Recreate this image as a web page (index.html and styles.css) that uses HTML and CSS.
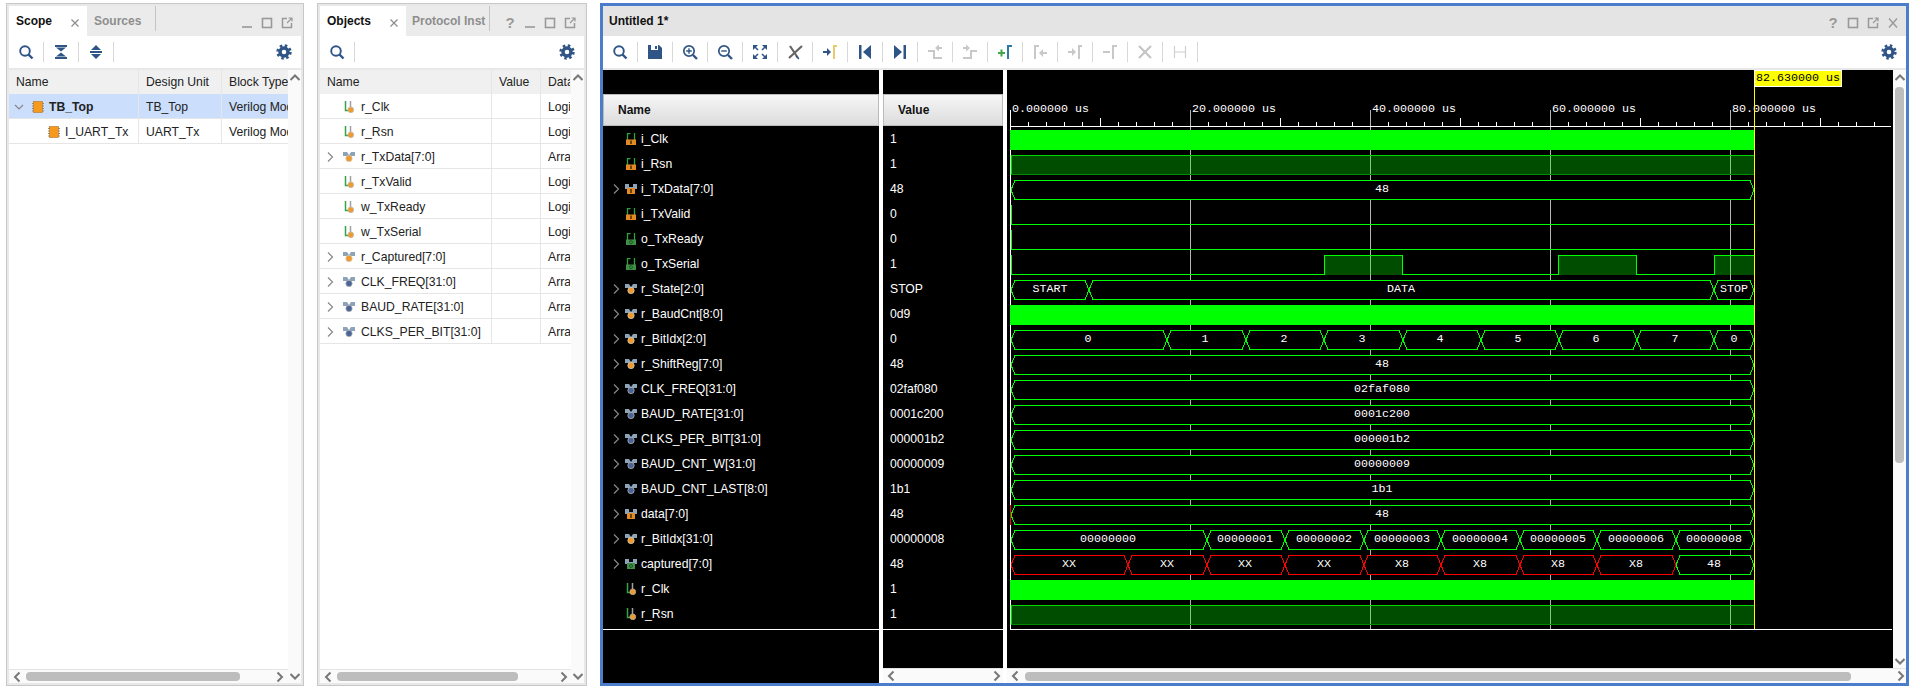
FILE: index.html
```html
<!DOCTYPE html>
<html>

<head>
    <meta charset="UTF-8">
    <title>Untitled 1*</title>
    <link rel="stylesheet" href="styles.css">
</head>

<body>
    <!-- icons -->
    <svg class="defs" width="0" height="0">
        <symbol id="search" viewBox="0 0 16 16"><circle cx="7" cy="7" r="4.8" fill="none" stroke="#2f5586" stroke-width="1.9"/><path d="M10.5 10.5L14.5 14.5" stroke="#2f5586" stroke-width="2.4"/></symbol>
        <symbol id="zoomin" viewBox="0 0 16 16"><circle cx="7" cy="7" r="5.2" fill="none" stroke="#2f5586" stroke-width="1.7"/><path d="M11 11L15 15" stroke="#2f5586" stroke-width="2.4"/><path d="M4.2 7h5.6M7 4.2v5.6" stroke="#2f5586" stroke-width="1.4"/></symbol>
        <symbol id="zoomout" viewBox="0 0 16 16"><circle cx="7" cy="7" r="5.2" fill="none" stroke="#2f5586" stroke-width="1.7"/><path d="M11 11L15 15" stroke="#2f5586" stroke-width="2.4"/><path d="M4.2 7h5.6" stroke="#2f5586" stroke-width="1.4"/></symbol>
        <symbol id="collapse" viewBox="0 0 16 16"><path d="M2 1h12v2H2zM3 3.500h10L8 7.500zM8 8.500l5 4H3zM2 13h12v2H2z" fill="#2f5586"/></symbol>
        <symbol id="expand" viewBox="0 0 16 16"><path d="M8 1l5 5H3zM2 7h12v2H2zM3 10h10l-5 5z" fill="#2f5586"/></symbol>
        <symbol id="gear" viewBox="0 0 16 16"><circle cx="8" cy="8" r="4" fill="none" stroke="#2f5586" stroke-width="3.4"/><circle cx="8" cy="8" r="6.4" fill="none" stroke="#2f5586" stroke-width="2.6" stroke-dasharray="2.5 2.53"/></symbol>
        <symbol id="save" viewBox="0 0 16 16"><path d="M1 1h11l3 3v11H1z" fill="#2f5586"/><path d="M4 1h7v5H4z" fill="#fff"/><path d="M8 2h2v3H8z" fill="#2f5586"/></symbol>
        <symbol id="fit" viewBox="0 0 16 16"><path d="M1 1h5L1 6zM15 1v5l-5-5zM1 15v-5l5 5zM15 15h-5l5-5z" fill="#2f5586"/><path d="M3 3l3 3M13 3l-3 3M3 13l3-3M13 13l-3-3" stroke="#2f5586" stroke-width="1.5"/></symbol>
        <symbol id="crossout" viewBox="0 0 16 16"><path d="M3 2l8 12M2 14L15 2" stroke="#666" stroke-width="2.2" fill="none"/><path d="M9 12l3 3" stroke="#2f5586" stroke-width="1.2"/></symbol>
        <symbol id="gotocursor" viewBox="0 0 16 16"><path d="M1 7h4V4l4 4-4 4V9H1z" fill="#2f5586"/><path d="M15 2h-3v13" fill="none" stroke="#e8cc6c" stroke-width="2"/></symbol>
        <symbol id="first" viewBox="0 0 16 16"><path d="M2 1h2.5v14H2zM14 1v14L6 8z" fill="#2f5586"/></symbol>
        <symbol id="last" viewBox="0 0 16 16"><path d="M14 1h-2.500v14H14zM2 1v14l8-7z" fill="#2f5586"/></symbol>
        <symbol id="prevedge" viewBox="0 0 16 16"><path d="M1 7h6v7h8" fill="none" stroke="#c8c8c8" stroke-width="2"/><path d="M15 3h-3V.5L8 4l4 3.500V5h3z" fill="#c8c8c8"/></symbol>
        <symbol id="nextedge" viewBox="0 0 16 16"><path d="M1 14h8V7h6" fill="none" stroke="#c8c8c8" stroke-width="2"/><path d="M1 3h3V.5L8 4 4 7.500V5H1z" fill="#c8c8c8"/></symbol>
        <symbol id="addmarker" viewBox="0 0 16 16"><path d="M1 9h7M4.500 5.500v7" stroke="#3fa64a" stroke-width="2"/><path d="M15 2h-4v13" fill="none" stroke="#2e79a8" stroke-width="2"/></symbol>
        <symbol id="prevmarker" viewBox="0 0 16 16"><path d="M7 2H3v13" fill="none" stroke="#c8c8c8" stroke-width="2"/><path d="M15 8h-4V5L7 9l4 4v-3h4z" fill="#c8c8c8"/></symbol>
        <symbol id="nextmarker" viewBox="0 0 16 16"><path d="M15 2h-3v13" fill="none" stroke="#c8c8c8" stroke-width="2"/><path d="M1 7h4V4l4 4-4 4V9H1z" fill="#c8c8c8"/></symbol>
        <symbol id="delmarker" viewBox="0 0 16 16"><path d="M15 2h-4v13" fill="none" stroke="#c8c8c8" stroke-width="2"/><path d="M1 8h7" stroke="#c8c8c8" stroke-width="2"/></symbol>
        <symbol id="delall" viewBox="0 0 16 16"><path d="M2 2l12 12M14 2L2 14" stroke="#c4c4c4" stroke-width="2.200"/></symbol>
        <symbol id="measure" viewBox="0 0 16 16"><path d="M2.500 2v12M13.500 2v12M3 8h10" stroke="#cfcfcf" stroke-width="1.200"/></symbol>

        <symbol id="module" viewBox="0 0 12 12"><path d="M0 2.500h12M0 5h12M0 7.500h12M0 10h12" stroke="#8a8a8a"/><rect x="1.500" y=".5" width="9" height="11" fill="#f59a1d" stroke="#b0762a" stroke-width=".6"/></symbol>
        <symbol id="sig" viewBox="0 0 12 12"><path d="M2.500 0v9.500H5" fill="none" stroke="#36a24a" stroke-width="1.500"/><path d="M7.500 0v6" stroke="#a0a0a0" stroke-width="1.500"/><circle cx="7.800" cy="8.800" r="2.900" fill="#f09a2e" stroke="#b9b9b9" stroke-width=".7"/></symbol>
        <symbol id="bus" viewBox="0 0 12 12"><path d="M0 1h4l2 3 2-3h4v4H8L6 7 4 5H0z" fill="#8da3b8"/><circle cx="6" cy="7.500" r="3.200" fill="#f09a2e" stroke="#ccc" stroke-width=".7"/></symbol>
        <symbol id="const" viewBox="0 0 12 12"><path d="M0 1h4l2 3 2-3h4v4H8L6 7 4 5H0z" fill="#8da3b8"/><circle cx="6" cy="7.500" r="3.200" fill="#4b6596" stroke="#bbb" stroke-width=".7"/></symbol>
        <symbol id="portin" viewBox="0 0 12 12"><path d="M2.500 7V.7h3M9.500 7V0" fill="none" stroke="#2da23f" stroke-width="1.300"/><rect x="1" y="6.500" width="10" height="5.500" fill="#e58a22"/><rect x="5" y="7.500" width="2" height="3.500" fill="#6b4416"/></symbol>
        <symbol id="portout" viewBox="0 0 12 12"><path d="M2.500 7V.7h3M9.500 7V0" fill="none" stroke="#2da23f" stroke-width="1.300"/><rect x="1" y="6.500" width="10" height="5.500" fill="#3f8f46"/><circle cx="6" cy="9.200" r="1.500" fill="none" stroke="#1f5a25"/></symbol>
        <symbol id="busin" viewBox="0 0 12 12"><path d="M0 1h4v3h4V1h4v5H0z" fill="#8da3b8"/><rect x="2" y="5" width="8" height="6" fill="#e58a22"/><rect x="5" y="6" width="2" height="4" fill="#6b4416"/></symbol>
        <symbol id="busout" viewBox="0 0 12 12"><path d="M0 1h4v3h4V1h4v5H0z" fill="#8da3b8"/><rect x="2" y="5" width="8" height="6" fill="#3f8f46"/><circle cx="6" cy="8" r="1.500" fill="none" stroke="#1f5a25"/></symbol>

        <symbol id="chev-l" viewBox="0 0 10 12"><path d="M7.500 1.500L3 6l4.500 4.500" fill="none" stroke="#777" stroke-width="2"/></symbol>
        <symbol id="chev-r" viewBox="0 0 10 12"><path d="M2.500 1.500L7 6l-4.500 4.500" fill="none" stroke="#777" stroke-width="2"/></symbol>
        <symbol id="chev-u" viewBox="0 0 10 12"><path d="M.5 8L5 3.500 9.500 8" fill="none" stroke="#777" stroke-width="2"/></symbol>
        <symbol id="chev-d" viewBox="0 0 10 12"><path d="M.5 4L5 8.500 9.500 4" fill="none" stroke="#777" stroke-width="2"/></symbol>
        <symbol id="tree-r" viewBox="0 0 10 12"><path d="M3 1.500L7.500 6 3 10.500" fill="none" stroke="#888" stroke-width="1.200"/></symbol>
        <symbol id="tree-d" viewBox="0 0 10 12"><path d="M1 4l4 4 4-4" fill="none" stroke="#888" stroke-width="1.200"/></symbol>

        <symbol id="win-min" viewBox="0 0 12 12"><path d="M1 10h10" stroke="#999" stroke-width="1.600"/></symbol>
        <symbol id="win-max" viewBox="0 0 12 12"><rect x="1.500" y="1.500" width="9" height="9" fill="none" stroke="#999" stroke-width="1.600"/></symbol>
        <symbol id="win-float" viewBox="0 0 12 12"><path d="M6 1.500H1.500v9h9V6" fill="none" stroke="#999" stroke-width="1.500"/><path d="M6 6l5-5M7.500 1h3.500v3.500" fill="none" stroke="#999" stroke-width="1.200"/></symbol>
        <symbol id="win-close" viewBox="0 0 12 12"><path d="M2 1.500l8 9M10 1.500l-8 9" stroke="#999" stroke-width="1.400"/></symbol>
        <symbol id="tab-close" viewBox="0 0 10 10"><path d="M1.500 1.500l7 7M8.500 1.500l-7 7" stroke="#8c8c8c" stroke-width="1.200"/></symbol>

        <polygon id="bus-full" points="1011,10 1015,.5 1750,.5 1754,10 1750,19.500 1015,19.500"/>
    </svg>

    <!-- scope panel -->
    <div class="panel scope">
        <div class="tabs">
            <div class="tab active">Scope<svg class="tab-x"><use href="#tab-close"/></svg></div>
            <div class="tab">Sources</div>
            <div class="win-btns">
                <svg class="win"><use href="#win-min"/></svg>
                <svg class="win"><use href="#win-max"/></svg>
                <svg class="win"><use href="#win-float"/></svg>
            </div>
        </div>
        <div class="toolbar">
            <span class="tool"><svg class="tool-ico"><use href="#search"/></svg></span>
            <span class="tool"><svg class="tool-ico"><use href="#collapse"/></svg></span>
            <span class="tool"><svg class="tool-ico"><use href="#expand"/></svg></span>
            <span class="tool gear"><svg class="tool-ico"><use href="#gear"/></svg></span>
        </div>
        <div class="table-wrap">
            <div class="table">
                <div class="row head"><span class="cell">Name</span><span class="cell">Design Unit</span><span class="cell">Block Type</span></div>
                <div class="row selected">
                    <span class="cell name"><svg class="chev"><use href="#tree-d"/></svg><svg class="ico"><use href="#module"/></svg><b>TB_Top</b></span>
                    <span class="cell">TB_Top</span><span class="cell">Verilog Module</span>
                </div>
                <div class="row">
                    <span class="cell name child"><svg class="ico"><use href="#module"/></svg>I_UART_Tx</span>
                    <span class="cell">UART_Tx</span><span class="cell">Verilog Module</span>
                </div>
            </div>
            <div class="vscroll">
                <svg class="chev-s"><use href="#chev-u"/></svg>
                <svg class="chev-s"><use href="#chev-d"/></svg>
            </div>
            <div class="hscroll">
                <svg class="chev-s"><use href="#chev-l"/></svg>
                <span class="thumb"></span>
                <svg class="chev-s"><use href="#chev-r"/></svg>
            </div>
        </div>
    </div>

    <!-- objects panel -->
    <div class="panel objects">
        <div class="tabs">
            <div class="tab active">Objects<svg class="tab-x"><use href="#tab-close"/></svg></div>
            <div class="tab">Protocol Inst</div>
            <div class="win-btns">
                <span class="win help">?</span>
                <svg class="win"><use href="#win-min"/></svg>
                <svg class="win"><use href="#win-max"/></svg>
                <svg class="win"><use href="#win-float"/></svg>
            </div>
        </div>
        <div class="toolbar">
            <span class="tool"><svg class="tool-ico"><use href="#search"/></svg></span>
            <span class="tool gear"><svg class="tool-ico"><use href="#gear"/></svg></span>
        </div>
        <div class="table-wrap">
            <div class="table">
                <div class="row head"><span class="cell">Name</span><span class="cell">Value</span><span class="cell">Data Type</span></div>
                <div class="row"><span class="cell name leaf"><svg class="ico"><use href="#sig"/></svg>r_Clk</span><span class="cell"></span><span class="cell">Logic</span></div>
                <div class="row"><span class="cell name leaf"><svg class="ico"><use href="#sig"/></svg>r_Rsn</span><span class="cell"></span><span class="cell">Logic</span></div>
                <div class="row"><span class="cell name"><svg class="chev"><use href="#tree-r"/></svg><svg class="ico"><use href="#bus"/></svg>r_TxData[7:0]</span><span class="cell"></span><span class="cell">Array</span></div>
                <div class="row"><span class="cell name leaf"><svg class="ico"><use href="#sig"/></svg>r_TxValid</span><span class="cell"></span><span class="cell">Logic</span></div>
                <div class="row"><span class="cell name leaf"><svg class="ico"><use href="#sig"/></svg>w_TxReady</span><span class="cell"></span><span class="cell">Logic</span></div>
                <div class="row"><span class="cell name leaf"><svg class="ico"><use href="#sig"/></svg>w_TxSerial</span><span class="cell"></span><span class="cell">Logic</span></div>
                <div class="row"><span class="cell name"><svg class="chev"><use href="#tree-r"/></svg><svg class="ico"><use href="#bus"/></svg>r_Captured[7:0]</span><span class="cell"></span><span class="cell">Array</span></div>
                <div class="row"><span class="cell name"><svg class="chev"><use href="#tree-r"/></svg><svg class="ico"><use href="#const"/></svg>CLK_FREQ[31:0]</span><span class="cell"></span><span class="cell">Array</span></div>
                <div class="row"><span class="cell name"><svg class="chev"><use href="#tree-r"/></svg><svg class="ico"><use href="#const"/></svg>BAUD_RATE[31:0]</span><span class="cell"></span><span class="cell">Array</span></div>
                <div class="row"><span class="cell name"><svg class="chev"><use href="#tree-r"/></svg><svg class="ico"><use href="#const"/></svg>CLKS_PER_BIT[31:0]</span><span class="cell"></span><span class="cell">Array</span></div>
            </div>
            <div class="vscroll">
                <svg class="chev-s"><use href="#chev-u"/></svg>
                <svg class="chev-s"><use href="#chev-d"/></svg>
            </div>
            <div class="hscroll">
                <svg class="chev-s"><use href="#chev-l"/></svg>
                <span class="thumb"></span>
                <svg class="chev-s"><use href="#chev-r"/></svg>
            </div>
        </div>
    </div>

    <!-- waveform window -->
    <div class="panel wave">
        <div class="tabs">
            <div class="wave-title">Untitled 1*</div>
            <div class="win-btns">
                <span class="win help">?</span>
                <svg class="win"><use href="#win-max"/></svg>
                <svg class="win"><use href="#win-float"/></svg>
                <svg class="win"><use href="#win-close"/></svg>
            </div>
        </div>
        <div class="toolbar">
            <span class="tool"><svg class="tool-ico"><use href="#search"/></svg></span>
            <span class="tool"><svg class="tool-ico"><use href="#save"/></svg></span>
            <span class="tool"><svg class="tool-ico"><use href="#zoomin"/></svg></span>
            <span class="tool"><svg class="tool-ico"><use href="#zoomout"/></svg></span>
            <span class="tool"><svg class="tool-ico"><use href="#fit"/></svg></span>
            <span class="tool"><svg class="tool-ico"><use href="#crossout"/></svg></span>
            <span class="tool"><svg class="tool-ico"><use href="#gotocursor"/></svg></span>
            <span class="tool"><svg class="tool-ico"><use href="#first"/></svg></span>
            <span class="tool"><svg class="tool-ico"><use href="#last"/></svg></span>
            <span class="tool"><svg class="tool-ico"><use href="#prevedge"/></svg></span>
            <span class="tool"><svg class="tool-ico"><use href="#nextedge"/></svg></span>
            <span class="tool"><svg class="tool-ico"><use href="#addmarker"/></svg></span>
            <span class="tool"><svg class="tool-ico"><use href="#prevmarker"/></svg></span>
            <span class="tool"><svg class="tool-ico"><use href="#nextmarker"/></svg></span>
            <span class="tool"><svg class="tool-ico"><use href="#delmarker"/></svg></span>
            <span class="tool"><svg class="tool-ico"><use href="#delall"/></svg></span>
            <span class="tool"><svg class="tool-ico"><use href="#measure"/></svg></span>
            <span class="tool gear"><svg class="tool-ico"><use href="#gear"/></svg></span>
        </div>
        <div class="wave-body">
            <div class="sig-col">
                <div class="sig-head name-head">Name</div>
                <div class="sig-rows">
                    <div class="sig leaf"><svg class="ico"><use href="#portin"/></svg>i_Clk</div>
                    <div class="sig leaf"><svg class="ico"><use href="#portin"/></svg>i_Rsn</div>
                    <div class="sig"><svg class="chev"><use href="#tree-r"/></svg><svg class="ico"><use href="#busin"/></svg>i_TxData[7:0]</div>
                    <div class="sig leaf"><svg class="ico"><use href="#portin"/></svg>i_TxValid</div>
                    <div class="sig leaf"><svg class="ico"><use href="#portout"/></svg>o_TxReady</div>
                    <div class="sig leaf"><svg class="ico"><use href="#portout"/></svg>o_TxSerial</div>
                    <div class="sig"><svg class="chev"><use href="#tree-r"/></svg><svg class="ico"><use href="#bus"/></svg>r_State[2:0]</div>
                    <div class="sig"><svg class="chev"><use href="#tree-r"/></svg><svg class="ico"><use href="#bus"/></svg>r_BaudCnt[8:0]</div>
                    <div class="sig"><svg class="chev"><use href="#tree-r"/></svg><svg class="ico"><use href="#bus"/></svg>r_BitIdx[2:0]</div>
                    <div class="sig"><svg class="chev"><use href="#tree-r"/></svg><svg class="ico"><use href="#bus"/></svg>r_ShiftReg[7:0]</div>
                    <div class="sig"><svg class="chev"><use href="#tree-r"/></svg><svg class="ico"><use href="#const"/></svg>CLK_FREQ[31:0]</div>
                    <div class="sig"><svg class="chev"><use href="#tree-r"/></svg><svg class="ico"><use href="#const"/></svg>BAUD_RATE[31:0]</div>
                    <div class="sig"><svg class="chev"><use href="#tree-r"/></svg><svg class="ico"><use href="#const"/></svg>CLKS_PER_BIT[31:0]</div>
                    <div class="sig"><svg class="chev"><use href="#tree-r"/></svg><svg class="ico"><use href="#const"/></svg>BAUD_CNT_W[31:0]</div>
                    <div class="sig"><svg class="chev"><use href="#tree-r"/></svg><svg class="ico"><use href="#const"/></svg>BAUD_CNT_LAST[8:0]</div>
                    <div class="sig"><svg class="chev"><use href="#tree-r"/></svg><svg class="ico"><use href="#busin"/></svg>data[7:0]</div>
                    <div class="sig"><svg class="chev"><use href="#tree-r"/></svg><svg class="ico"><use href="#bus"/></svg>r_BitIdx[31:0]</div>
                    <div class="sig"><svg class="chev"><use href="#tree-r"/></svg><svg class="ico"><use href="#busout"/></svg>captured[7:0]</div>
                    <div class="sig leaf"><svg class="ico"><use href="#sig"/></svg>r_Clk</div>
                    <div class="sig leaf"><svg class="ico"><use href="#sig"/></svg>r_Rsn</div>
                </div>
            </div>

            <div class="val-wrap">
                <div class="sig-col">
                    <div class="sig-head val-head">Value</div>
                    <div class="sig-rows vals">
                        <div class="sig">1</div>
                        <div class="sig">1</div>
                        <div class="sig">48</div>
                        <div class="sig">0</div>
                        <div class="sig">0</div>
                        <div class="sig">1</div>
                        <div class="sig">STOP</div>
                        <div class="sig">0d9</div>
                        <div class="sig">0</div>
                        <div class="sig">48</div>
                        <div class="sig">02faf080</div>
                        <div class="sig">0001c200</div>
                        <div class="sig">000001b2</div>
                        <div class="sig">00000009</div>
                        <div class="sig">1b1</div>
                        <div class="sig">48</div>
                        <div class="sig">00000008</div>
                        <div class="sig">48</div>
                        <div class="sig">1</div>
                        <div class="sig">1</div>
                    </div>
                </div>
                <div class="hscroll val-scroll">
                    <svg class="chev-s"><use href="#chev-l"/></svg>
                    <svg class="chev-s"><use href="#chev-r"/></svg>
                </div>
            </div>

            <div class="plot-wrap">
                <!-- viewBox uses page coordinates -->
                <svg class="plot" viewBox="1007 70 886 598" width="886" height="598">
                    <g class="grid">
                        <path d="M1190.500 110V629M1370.500 110V629M1550.500 110V629M1730.500 110V629"/>
                    </g>
                    <path class="axis" d="M1010.500 110V629.500H1892M1010 126.500H1891"/>
                    <path class="axis" d="M1028.500 122v4M1046.500 122v4M1064.500 122v4M1082.500 122v4M1100.500 118v8M1118.500 122v4M1136.500 122v4M1154.500 122v4M1172.500 122v4M1208.500 122v4M1226.500 122v4M1244.500 122v4M1262.500 122v4M1280.500 118v8M1298.500 122v4M1316.500 122v4M1334.500 122v4M1352.500 122v4M1388.500 122v4M1406.500 122v4M1424.500 122v4M1442.500 122v4M1460.500 118v8M1478.500 122v4M1496.500 122v4M1514.500 122v4M1532.500 122v4M1568.500 122v4M1586.500 122v4M1604.500 122v4M1622.500 122v4M1640.500 118v8M1658.500 122v4M1676.500 122v4M1694.500 122v4M1712.500 122v4M1748.500 122v4M1766.500 122v4M1784.500 122v4M1802.500 122v4M1820.500 118v8M1838.500 122v4M1856.500 122v4M1874.500 122v4"/>
                    <text class="t" x="1012" y="112">0.000000 us</text>
                    <text class="t" x="1192" y="112">20.000000 us</text>
                    <text class="t" x="1372" y="112">40.000000 us</text>
                    <text class="t" x="1552" y="112">60.000000 us</text>
                    <text class="t" x="1732" y="112">80.000000 us</text>

                    <!-- i_Clk, r_BaudCnt, r_Clk -->
                    <rect class="solid" x="1010" y="130" width="744" height="20"/>
                    <rect class="solid" x="1010" y="305" width="744" height="20"/>
                    <rect class="solid" x="1010" y="580" width="744" height="20"/>

                    <!-- i_Rsn, r_Rsn -->
                    <rect class="high" x="1010" y="155" width="744" height="20"/>
                    <path class="high-top" d="M1011.500 175V155.500H1754"/>
                    <path class="high-low" d="M1011 174.500H1754"/>
                    <rect class="high" x="1010" y="605" width="744" height="20"/>
                    <path class="high-top" d="M1011.500 625V605.500H1754"/>
                    <path class="high-low" d="M1011 624.500H1754"/>

                    <!-- i_TxValid, o_TxReady -->
                    <path class="line" d="M1011 205V224.500H1754"/>
                    <path class="line" d="M1011 230V249.500H1754"/>

                    <!-- o_TxSerial -->
                    <rect class="high" x="1325" y="255" width="78" height="20"/>
                    <rect class="high" x="1559" y="255" width="78" height="20"/>
                    <rect class="high" x="1714" y="255" width="40" height="20"/>
                    <path class="line" d="M1011 255V274.500H1324.500V255.500H1402.500V274.500H1558.500V255.500H1636.500V274.500H1714.500V255.500H1754"/>

                    <!-- full width buses -->
                    <use class="bus" href="#bus-full" y="180"/>
                    <use class="bus" href="#bus-full" y="355"/>
                    <use class="bus" href="#bus-full" y="380"/>
                    <use class="bus" href="#bus-full" y="405"/>
                    <use class="bus" href="#bus-full" y="430"/>
                    <use class="bus" href="#bus-full" y="455"/>
                    <use class="bus" href="#bus-full" y="480"/>
                    <use class="bus" href="#bus-full" y="505"/>
                    <text class="t c" x="1382" y="192">48</text>
                    <text class="t c" x="1382" y="367">48</text>
                    <text class="t c" x="1382" y="392">02faf080</text>
                    <text class="t c" x="1382" y="417">0001c200</text>
                    <text class="t c" x="1382" y="442">000001b2</text>
                    <text class="t c" x="1382" y="467">00000009</text>
                    <text class="t c" x="1382" y="492">1b1</text>
                    <text class="t c" x="1382" y="517">48</text>
                    <path class="red-tip" d="M1010.500 505V525"/>

                    <!-- r_State -->
                    <polygon class="bus" points="1011,290 1015,280.500 1085,280.500 1089,290 1085,299.500 1015,299.500"/>
                    <polygon class="bus" points="1089,290 1093,280.500 1710,280.500 1714,290 1710,299.500 1093,299.500"/>
                    <polygon class="bus" points="1714,290 1718,280.500 1750,280.500 1754,290 1750,299.500 1718,299.500"/>
                    <text class="t c" x="1050" y="292">START</text>
                    <text class="t c" x="1401" y="292">DATA</text>
                    <text class="t c" x="1734" y="292">STOP</text>

                    <!-- r_BitIdx[2:0] -->
                    <polygon class="bus" points="1011,340 1015,330.500 1163,330.500 1167,340 1163,349.500 1015,349.500"/>
                    <polygon class="bus" points="1167,340 1171,330.500 1242,330.500 1246,340 1242,349.500 1171,349.500"/>
                    <polygon class="bus" points="1246,340 1250,330.500 1320,330.500 1324,340 1320,349.500 1250,349.500"/>
                    <polygon class="bus" points="1324,340 1328,330.500 1399,330.500 1403,340 1399,349.500 1328,349.500"/>
                    <polygon class="bus" points="1403,340 1407,330.500 1477,330.500 1481,340 1477,349.500 1407,349.500"/>
                    <polygon class="bus" points="1481,340 1485,330.500 1555,330.500 1559,340 1555,349.500 1485,349.500"/>
                    <polygon class="bus" points="1559,340 1563,330.500 1633,330.500 1637,340 1633,349.500 1563,349.500"/>
                    <polygon class="bus" points="1637,340 1641,330.500 1710,330.500 1714,340 1710,349.500 1641,349.500"/>
                    <polygon class="bus" points="1714,340 1718,330.500 1750,330.500 1754,340 1750,349.500 1718,349.500"/>
                    <text class="t c" x="1088" y="342">0</text>
                    <text class="t c" x="1205" y="342">1</text>
                    <text class="t c" x="1284" y="342">2</text>
                    <text class="t c" x="1362" y="342">3</text>
                    <text class="t c" x="1440" y="342">4</text>
                    <text class="t c" x="1518" y="342">5</text>
                    <text class="t c" x="1596" y="342">6</text>
                    <text class="t c" x="1675" y="342">7</text>
                    <text class="t c" x="1734" y="342">0</text>

                    <!-- r_BitIdx[31:0] -->
                    <polygon class="bus" points="1011,540 1015,530.500 1203,530.500 1207,540 1203,549.500 1015,549.500"/>
                    <polygon class="bus" points="1207,540 1211,530.500 1281,530.500 1285,540 1281,549.500 1211,549.500"/>
                    <polygon class="bus" points="1285,540 1289,530.500 1360,530.500 1364,540 1360,549.500 1289,549.500"/>
                    <polygon class="bus" points="1364,540 1368,530.500 1437,530.500 1441,540 1437,549.500 1368,549.500"/>
                    <polygon class="bus" points="1441,540 1445,530.500 1516,530.500 1520,540 1516,549.500 1445,549.500"/>
                    <polygon class="bus" points="1520,540 1524,530.500 1593,530.500 1597,540 1593,549.500 1524,549.500"/>
                    <polygon class="bus" points="1597,540 1601,530.500 1672,530.500 1676,540 1672,549.500 1601,549.500"/>
                    <polygon class="bus" points="1676,540 1680,530.500 1750,530.500 1754,540 1750,549.500 1680,549.500"/>
                    <text class="t c" x="1108" y="542">00000000</text>
                    <text class="t c" x="1245" y="542">00000001</text>
                    <text class="t c" x="1324" y="542">00000002</text>
                    <text class="t c" x="1402" y="542">00000003</text>
                    <text class="t c" x="1480" y="542">00000004</text>
                    <text class="t c" x="1558" y="542">00000005</text>
                    <text class="t c" x="1636" y="542">00000006</text>
                    <text class="t c" x="1714" y="542">00000008</text>

                    <!-- captured[7:0] -->
                    <polygon class="bus x" points="1011,565 1015,555.500 1124,555.500 1128,565 1124,574.500 1015,574.500"/>
                    <polygon class="bus x" points="1128,565 1132,555.500 1203,555.500 1207,565 1203,574.500 1132,574.500"/>
                    <polygon class="bus x" points="1207,565 1211,555.500 1281,555.500 1285,565 1281,574.500 1211,574.500"/>
                    <polygon class="bus x" points="1285,565 1289,555.500 1360,555.500 1364,565 1360,574.500 1289,574.500"/>
                    <polygon class="bus x" points="1364,565 1368,555.500 1437,555.500 1441,565 1437,574.500 1368,574.500"/>
                    <polygon class="bus x" points="1441,565 1445,555.500 1516,555.500 1520,565 1516,574.500 1445,574.500"/>
                    <polygon class="bus x" points="1520,565 1524,555.500 1593,555.500 1597,565 1593,574.500 1524,574.500"/>
                    <polygon class="bus x" points="1597,565 1601,555.500 1672,555.500 1676,565 1672,574.500 1601,574.500"/>
                    <polygon class="bus" points="1676,565 1680,555.500 1750,555.500 1754,565 1750,574.500 1680,574.500"/>
                    <text class="t c" x="1069" y="567">XX</text>
                    <text class="t c" x="1167" y="567">XX</text>
                    <text class="t c" x="1245" y="567">XX</text>
                    <text class="t c" x="1324" y="567">XX</text>
                    <text class="t c" x="1402" y="567">X8</text>
                    <text class="t c" x="1480" y="567">X8</text>
                    <text class="t c" x="1558" y="567">X8</text>
                    <text class="t c" x="1636" y="567">X8</text>
                    <text class="t c" x="1714" y="567">48</text>

                    <!-- cursor -->
                    <path class="cursor" d="M1754.500 86V629"/>
                    <rect class="cursor-box" x="1754.500" y="70.500" width="87" height="16"/>
                    <text class="t dark" x="1756" y="81">82.630000 us</text>
                </svg>
                <div class="vscroll">
                    <svg class="chev-s"><use href="#chev-u"/></svg>
                    <span class="vthumb"></span>
                    <svg class="chev-s"><use href="#chev-d"/></svg>
                </div>
                <div class="hscroll plot-scroll">
                    <svg class="chev-s"><use href="#chev-l"/></svg>
                    <span class="thumb"></span>
                    <svg class="chev-s"><use href="#chev-r"/></svg>
                </div>
            </div>
        </div>
    </div>
</body>

</html>
```

FILE: styles.css
```css
html,
body {
    margin: 0;
    padding: 0;
}

body {
    width: 1920px;
    height: 692px;
    overflow: hidden;
    background-color: #fff;
    display: flex;
    align-items: flex-start;
    padding: 3px 0 0 6px;
    box-sizing: border-box;
    font-family: "Liberation Sans", Arial, sans-serif;
    font-size: 12.2px;
    color: #222;
}

.defs {
    position: absolute;
}

/* panels */
.panel {
    height: 683px;
    box-sizing: border-box;
    display: flex;
    flex-direction: column;
    background-color: #e8e8e8;
    border: 1px solid #c8c8c8;
    padding: 2px;
}

.scope {
    width: 298px;
    margin-right: 13px;
}

.objects {
    width: 270px;
    margin-right: 13px;
}

.wave {
    width: 1309px;
    border: 3px solid #4c7dcb;
    padding: 0;
}

/* tabs */
.tabs {
    height: 30px;
    flex: none;
    display: flex;
    background-color: #ebebeb;
}

.wave .tabs {
    background-color: #e4e4e4;
}

.tab {
    display: flex;
    align-items: center;
    height: 30px;
    padding: 0 7px;
    box-sizing: border-box;
    font-weight: bold;
    font-size: 12px;
    color: #8e8e8e;
    white-space: nowrap;
}

.tab.active {
    background-color: #fff;
    color: #111;
}

.tab:not(.active) {
    height: 25px;
    padding-top: 5px;
    padding-right: 0;
    border-right: 1px solid #c4c4c4;
}

.scope .tab.active {
    width: 78px;
}

.objects .tab.active {
    width: 86px;
}

.scope .tab:not(.active) {
    width: 69px;
}

.objects .tab:not(.active) {
    width: 84px;
    padding-left: 6px;
}

.tab-x {
    width: 10px;
    height: 10px;
    margin-left: auto;
    margin-top: 3px;
}

.wave-title {
    font-weight: bold;
    font-size: 12px;
    color: #111;
    line-height: 30px;
    padding-left: 6px;
}

.win-btns {
    margin-left: auto;
    display: flex;
    align-items: center;
    padding: 3px 4px 0 0;
}

.wave .win-btns {
    padding-right: 3px;
}

.win {
    width: 20px;
    height: 12px;
    display: block;
}

.help {
    height: auto;
    text-align: center;
    font-size: 15px;
    font-weight: bold;
    color: #999;
    line-height: 14px;
}

/* toolbar */
.toolbar {
    height: 32px;
    flex: none;
    display: flex;
    align-items: center;
    background-color: #fff;
    margin-bottom: 2px;
}

.tool {
    width: 34px;
    height: 20px;
    display: flex;
    align-items: center;
    justify-content: center;
    border-right: 1px solid #d8d8d8;
}

.tool-ico {
    width: 16px;
    height: 16px;
}

.gear {
    margin-left: auto;
    border-right: none;
}

/* tables */
.table-wrap {
    flex: 1;
    display: grid;
    grid-template-columns: 1fr 13px;
    grid-template-rows: 1fr 14px;
    min-height: 0;
    background-color: #fff;
}

.table {
    overflow: hidden;
}

.row {
    display: grid;
    height: 25px;
    box-sizing: border-box;
    border-bottom: 1px solid #e6e6e6;
}

.scope .row {
    grid-template-columns: 130px 83px 66px;
}

.objects .row {
    grid-template-columns: 172px 49px 29px;
}

.head {
    height: 24px;
    background-color: #f0f0f0;
    border-bottom: none;
}

.selected {
    background-color: #cbdefb;
}

.cell {
    display: flex;
    align-items: center;
    white-space: nowrap;
    overflow: hidden;
    padding-left: 7px;
    padding-top: 1px;
    box-sizing: border-box;
    border-right: 1px solid #e6e6e6;
}

.head .cell {
    padding-top: 0;
}

.cell:last-child {
    border-right: none;
}

.cell.name {
    padding-left: 5px;
}

.cell.name.leaf {
    padding-left: 23px;
}

.cell.name.child {
    padding-left: 39px;
}

.chev {
    width: 10px;
    height: 12px;
    flex: none;
    margin-right: 8px;
}

.ico {
    width: 12px;
    height: 12px;
    flex: none;
    margin-right: 6px;
}

.scope .ico {
    margin-right: 5px;
}

/* scrollbars */
.vscroll {
    grid-row: 1 / 3;
    grid-column: 2;
    display: flex;
    flex-direction: column;
    align-items: center;
    justify-content: space-between;
    padding: 2px 0 1px;
    box-sizing: border-box;
    background-color: #fafafa;
}

.hscroll {
    display: flex;
    align-items: center;
    box-sizing: border-box;
    background-color: #fafafa;
    border-top: 1px solid #e4e4e4;
    padding: 0 3px;
}

.chev-s {
    width: 10px;
    height: 12px;
    flex: none;
}

.thumb {
    height: 9px;
    border-radius: 4px;
    background-color: #bdbdbd;
    margin-left: 4px;
    margin-right: auto;
}

.scope .thumb {
    width: 214px;
}

.objects .thumb {
    width: 181px;
}

.objects .hscroll {
    padding-right: 2px;
}

/* waveform body */
.wave-body {
    flex: 1;
    min-height: 0;
    display: grid;
    grid-template-columns: 276px 120px 899px;
    column-gap: 4px;
    background-color: #fff;
}

.sig-col {
    background-color: #000;
    color: #fff;
    padding-top: 24px;
    box-sizing: border-box;
    overflow: hidden;
}

.sig-head {
    height: 32px;
    line-height: 31px;
    box-sizing: border-box;
    font-weight: bold;
    font-size: 12px;
    color: #111;
    border: 1px solid #bbb;
    background: linear-gradient(#f6f6f6, #dcdcdc);
}

.name-head {
    padding-left: 14px;
}

.val-head {
    padding-left: 14px;
}

.sig-rows {
    padding-bottom: 3px;
    border-bottom: 1px solid #fff;
}

.sig {
    height: 25px;
    display: flex;
    align-items: center;
    padding-left: 8px;
    white-space: nowrap;
}

.sig.leaf {
    padding-left: 22px;
}

.sig .ico {
    margin-right: 4px;
}

.sig .chev {
    margin-right: 4px;
}

.vals .sig {
    padding-left: 7px;
}

.val-wrap {
    display: grid;
    grid-template-rows: 1fr 15px;
    min-height: 0;
}

.val-scroll {
    padding: 0 1px 0 3px;
    justify-content: space-between;
}

.plot-wrap {
    display: grid;
    grid-template-columns: 886px 13px;
    grid-template-rows: 598px 15px;
    min-height: 0;
}

.plot {
    display: block;
    background-color: #000;
    shape-rendering: crispEdges;
}

.plot-wrap .vscroll {
    grid-row: 1;
    justify-content: flex-start;
}

.plot-wrap .vscroll .chev-s:last-child {
    margin-top: auto;
}

.vthumb {
    width: 9px;
    height: 376px;
    margin-top: 3px;
    border-radius: 4px;
    background-color: #bdbdbd;
}

.plot-scroll {
    grid-column: 1 / 3;
    padding-right: 0;
}

.plot-scroll .thumb {
    width: 826px;
    margin-left: 5px;
}

/* waveform drawing */
.grid path {
    fill: none;
    stroke: #b4b4b4;
}

.axis {
    fill: none;
    stroke: #fff;
}

.solid {
    fill: #0f0;
}

.high {
    fill: #0f0;
    fill-opacity: 0.3;
}

.high-top {
    fill: none;
    stroke: #00d800;
}

.high-low {
    fill: none;
    stroke: #008a00;
}

.line,
.bus {
    fill: #000;
    stroke: #0f0;
}

.line {
    fill: none;
}

.bus.x {
    stroke: #f00;
}

.red-tip {
    stroke: #f00;
}

.t {
    font-family: "Liberation Mono", "Courier New", monospace;
    font-size: 11.67px;
    fill: #fff;
}

.c {
    text-anchor: middle;
}

.dark {
    fill: #000;
}

.cursor {
    fill: none;
    stroke: #ff0;
}

.cursor-box {
    fill: #ff0;
    stroke: #fff;
}
```
